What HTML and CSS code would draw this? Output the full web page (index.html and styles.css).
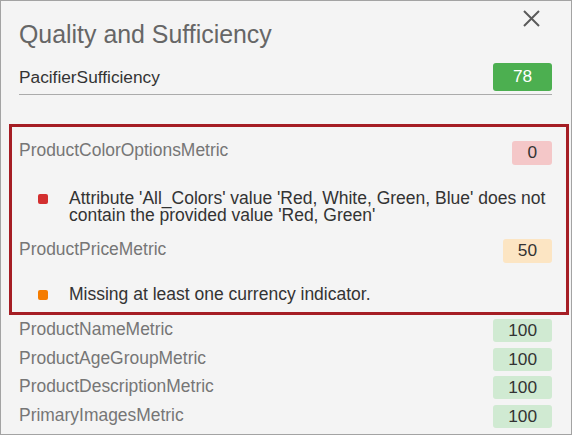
FILE: index.html
```html
<!DOCTYPE html>
<html lang="en">
<head>
<meta charset="utf-8">
<title>Quality and Sufficiency</title>
<link rel="stylesheet" href="styles.css">
</head>
<body>
<div class="panel">
  <div class="header">
    <h1 class="title">Quality and Sufficiency</h1>
    <button class="close" aria-label="Close">
      <svg width="17" height="17" viewBox="0 0 17 17"><path d="M1 1 L16 16 M16 1 L1 16" stroke="#5a5a5a" stroke-width="2" fill="none"/></svg>
    </button>
  </div>
  <div class="summary">
    <span class="summary-label">PacifierSufficiency</span>
    <span class="badge badge-strong">78</span>
  </div>
  <div class="issues">
    <div class="metric">
      <span class="metric-label">ProductColorOptionsMetric</span>
      <span class="badge badge-bad">0</span>
    </div>
    <ul class="messages first">
      <li class="message"><span class="dot dot-red"></span><span class="message-text">Attribute 'All_Colors' value 'Red, White, Green, Blue' does not contain the provided value 'Red, Green'</span></li>
    </ul>
    <div class="metric metric-second">
      <span class="metric-label">ProductPriceMetric</span>
      <span class="badge badge-warn">50</span>
    </div>
    <ul class="messages second">
      <li class="message"><span class="dot dot-orange"></span><span class="message-text">Missing at least one currency indicator.</span></li>
    </ul>
  </div>
  <div class="metric-list">
    <div class="metric"><span class="metric-label">ProductNameMetric</span><span class="badge badge-good">100</span></div>
    <div class="metric"><span class="metric-label">ProductAgeGroupMetric</span><span class="badge badge-good">100</span></div>
    <div class="metric"><span class="metric-label">ProductDescriptionMetric</span><span class="badge badge-good">100</span></div>
    <div class="metric"><span class="metric-label">PrimaryImagesMetric</span><span class="badge badge-good">100</span></div>
  </div>
</div>
</body>
</html>
```
FILE: styles.css
```css
* { box-sizing: border-box; }
html, body { margin: 0; padding: 0; }
body {
  font-family: "Liberation Sans", Arial, sans-serif;
  background: #f4f4f4;
}
.panel {
  width: 572px;
  height: 435px;
  border: 1px solid #a3a3a3;
  background: #f4f4f4;
  padding: 9px 19px 0 18px;
  overflow: hidden;
}
.header {
  display: flex;
  justify-content: space-between;
  align-items: flex-start;
}
.title {
  margin: 9px 0 0 0;
  font-size: 24.9px;
  line-height: 30px;
  font-weight: normal;
  color: #666666;
}
.close {
  border: 0;
  background: none;
  padding: 0;
  margin: 0 12px 0 0;
  width: 17px;
  height: 17px;
  display: block;
  cursor: pointer;
}
.close svg { display: block; }
.summary {
  display: flex;
  justify-content: space-between;
  align-items: center;
  margin-top: 14px;
  padding-bottom: 3px;
  border-bottom: 1px solid #ababab;
}
.summary-label {
  font-size: 17.3px;
  color: #333333;
}
.badge {
  font-size: 17.3px;
  line-height: 1;
  padding: 0 15px;
  height: 23px;
  display: flex;
  align-items: center;
  justify-content: center;
  border-radius: 3px;
  color: #333333;
}
.badge-strong {
  height: 28px;
  min-width: 59px;
  background: #4caf50;
  color: #ffffff;
}
.badge-bad { background: #f4c7c8; height: 24px; margin-top: 1px; }
.badge-warn { background: #fce5c3; height: 24px; }
.badge-good { background: #d0ead2; }
.issues {
  margin: 29px -17px 0 -10px;
  border: 3px solid #a51d24;
  padding: 13px 14px 9px 7px;
}
.metric {
  display: flex;
  justify-content: space-between;
  align-items: flex-start;
}
.metric-label {
  font-size: 17.45px;
  line-height: 20px;
  color: #767676;
}
.messages {
  list-style: none;
  margin: 0;
  padding: 0;
}
.messages.first { margin-top: 25px; }
.messages.second { margin-top: 23px; }
.metric-second { margin-top: 15px; }
.message {
  display: flex;
  align-items: flex-start;
  padding-left: 19px;
}
.dot {
  flex: none;
  width: 10px;
  height: 10px;
  border-radius: 2px;
  margin-top: 4px;
  margin-right: 21px;
}
.dot-red { background: #d32f2f; }
.dot-orange { background: #f57c00; }
.message-text {
  font-size: 17.5px;
  line-height: 17px;
  color: #333333;
}
.metric-list {
  display: flex;
  flex-direction: column;
  gap: 5.67px;
  margin-top: 4px;
}
```
